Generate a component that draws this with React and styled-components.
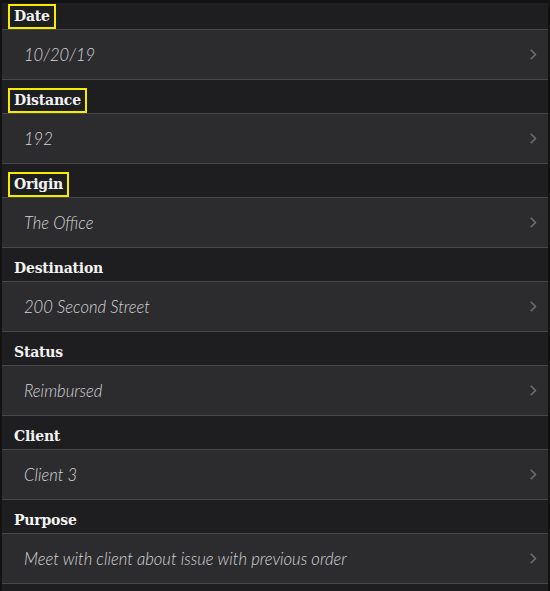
import React from "react";
import styled, { createGlobalStyle } from "styled-components";

const GlobalStyle = createGlobalStyle`
  html, body {
    margin: 0;
    padding: 0;
    background: #121213;
    overflow: hidden;
  }
`;

const fields = [
  { label: "Date", value: "10/20/19", marked: true },
  { label: "Distance", value: "192", marked: true },
  { label: "Origin", value: "The Office", marked: true },
  { label: "Destination", value: "200 Second Street" },
  { label: "Status", value: "Reimbursed" },
  { label: "Client", value: "Client 3" },
  { label: "Purpose", value: "Meet with client about issue with previous order" },
];

const Page = () => {
  return (
    <Wrapper>
      <GlobalStyle />
      <div className="list">
        {fields.map((f) => (
          <Section key={f.label}>
            <Header>
              <Label $marked={f.marked}>{f.label}</Label>
            </Header>
            <Row>
              <Value>{f.value}</Value>
              <Chevron width="7" height="11" viewBox="0 0 7 11">
                <polyline
                  points="1.2,1.2 5.6,5.5 1.2,9.8"
                  fill="none"
                  stroke="#6e6e72"
                  strokeWidth="1.6"
                  strokeLinecap="round"
                  strokeLinejoin="round"
                />
              </Chevron>
            </Row>
          </Section>
        ))}
      </div>
    </Wrapper>
  );
};

const Wrapper = styled.main`
  width: 550px;
  height: 591px;
  overflow: hidden;
  box-sizing: border-box;
  padding: 3px 2px 0 2px;
  .list {
    height: 588px;
    overflow: hidden;
    background-color: #1e1e20;
  }
  .list > div:first-child {
    margin-top: -7px;
  }
`;

const Section = styled.div`
  display: flex;
  flex-direction: column;
`;

const Header = styled.div`
  height: 33px;
  display: flex;
  align-items: flex-end;
  padding-left: 6px;
  background-color: #1e1e20;
  border-bottom: 1px solid #47474a;
`;

const Label = styled.span`
  font-family: "DejaVu Serif", "Liberation Serif", serif;
  font-weight: bold;
  font-size: 14px;
  letter-spacing: -0.2px;
  color: #f2f2f2;
  padding: 3px 4px 3px 4px;
  border: 2px solid ${(p) => (p.$marked ? "#f5ec00" : "transparent")};
  line-height: 15px;
`;

const Row = styled.div`
  height: 49px;
  display: flex;
  align-items: center;
  justify-content: space-between;
  padding: 0 11px 0 22px;
  background-color: #2c2c2e;
  border-bottom: 1px solid #47474a;
`;

const Value = styled.span`
  font-family: "Lato", "Open Sans", sans-serif;
  font-style: italic;
  font-weight: 300;
  font-size: 16.6px;
  color: #d4d4d6;
`;

const Chevron = styled.svg`
  flex-shrink: 0;
`;

export default function App() {
  return <Page />;
}
